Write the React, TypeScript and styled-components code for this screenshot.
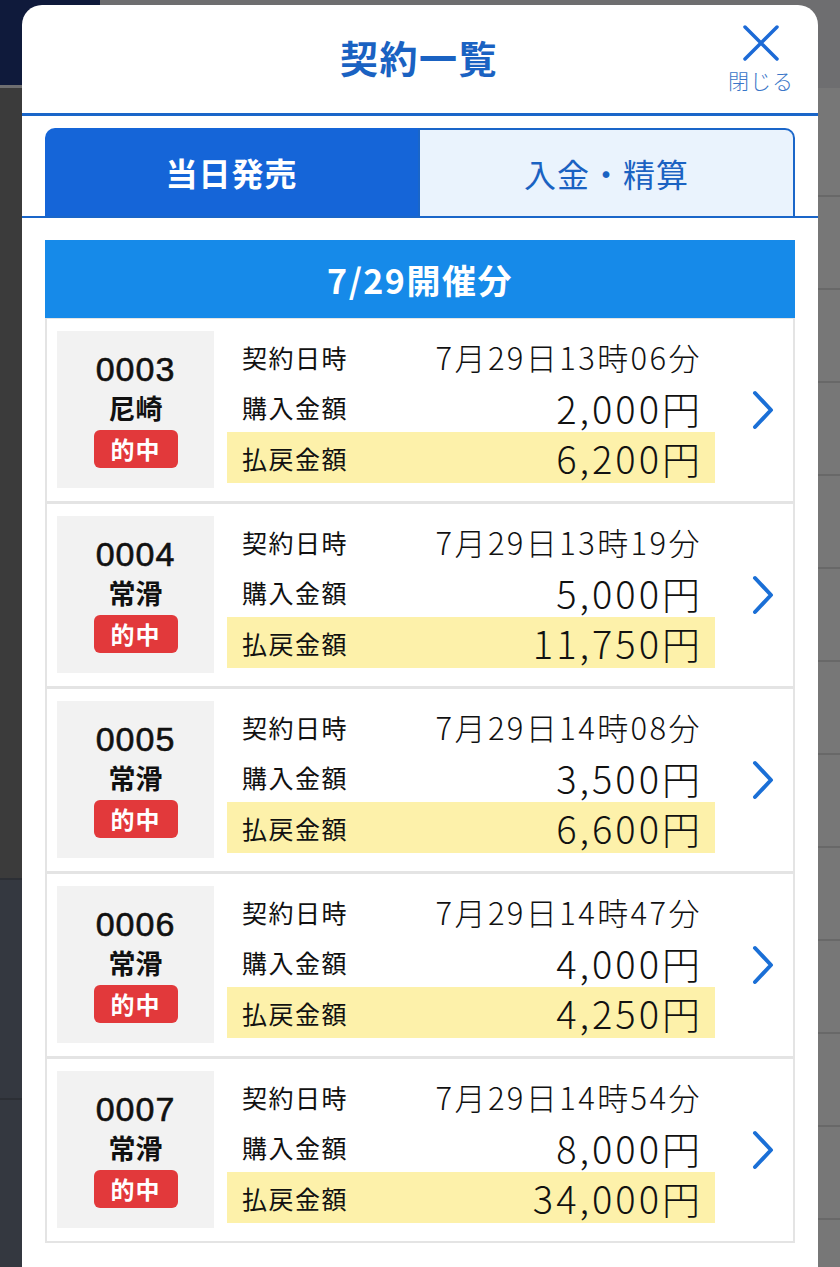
import styled, { createGlobalStyle } from "styled-components";

const GlobalStyle = createGlobalStyle`
  html, body {
    margin: 0;
    padding: 0;
    background: #3a3a3a;
  }
  * {
    box-sizing: border-box;
  }
`;

const FONT = `"Noto Sans CJK JP", "Noto Sans", "Liberation Sans", sans-serif`;

// dimmed page behind the sheet
const Page = styled.div`
  position: relative;
  width: 840px;
  height: 1267px;
  overflow: hidden;
  font-family: ${FONT};
`;

const BackTop = styled.div`
  display: flex;
  height: 88px;
  background: #6e6e70;
`;

const BackLogo = styled.div`
  width: 100px;
  height: 85px;
  background: #0f1a3b;
`;

const BackBody = styled.div`
  display: grid;
  grid-template-columns: 420px 1fr;
  height: calc(100% - 88px);
`;

const BackLeft = styled.div`
  display: flex;
  flex-direction: column;
`;

const BackPanel = styled.div<{ $tone: string; $h?: number }>`
  background: ${(p) => p.$tone};
  height: ${(p) => (p.$h ? `${p.$h}px` : "auto")};
  flex: ${(p) => (p.$h ? "none" : "1")};
  border-bottom: 2px solid #2c2f35;
`;

const BackRight = styled.div`
  display: flex;
  flex-direction: column;
  padding-top: 16px;
  background: #777777;
`;

const BackRow = styled.div`
  height: 93px;
  flex: none;
  border-bottom: 2px solid #686868;
`;

const Sheet = styled.div`
  position: absolute;
  left: 22px;
  top: 5px;
  width: 796px;
  bottom: -20px;
  background: #ffffff;
  border-radius: 20px 20px 0 0;
  display: flex;
  flex-direction: column;
`;

const Header = styled.div`
  display: grid;
  grid-template-columns: 1fr auto 1fr;
  align-items: center;
  height: 111px;
  border-bottom: 3px solid #1a66c9;
  padding: 0 24px 6px 22px;
`;

const Title = styled.h1`
  grid-column: 2;
  margin: 0;
  font-size: 38px;
  font-weight: 700;
  color: #1a62c2;
  letter-spacing: 1.5px;
`;

const CloseButton = styled.button`
  justify-self: end;
  display: flex;
  flex-direction: column;
  align-items: center;
  gap: 4px;
  margin-top: 8px;
  border: none;
  background: none;
  padding: 0;
  font-family: ${FONT};
  font-size: 21px;
  font-weight: 300;
  letter-spacing: 1px;
  color: #3a76c8;
  cursor: pointer;
`;

const TabBar = styled.div`
  display: flex;
  padding: 12px 23px 0 23px;
  border-bottom: 2px solid #1a66c9;
`;

const Tab = styled.div<{ $active?: boolean }>`
  flex: 1;
  height: 88px;
  display: flex;
  align-items: center;
  justify-content: center;
  font-size: 32px;
  font-weight: ${(p) => (p.$active ? 700 : 400)};
  color: ${(p) => (p.$active ? "#ffffff" : "#1a62c2")};
  background: ${(p) => (p.$active ? "#1565d8" : "#eaf3fd")};
  border: ${(p) => (p.$active ? "none" : "2px solid #1a66c9")};
  border-bottom: none;
  border-radius: ${(p) => (p.$active ? "10px 0 0 0" : "0 10px 0 0")};
  letter-spacing: 1px;
`;

const Content = styled.div`
  padding: 22px 23px 0 23px;
`;

const DateBar = styled.div`
  height: 78px;
  display: flex;
  align-items: center;
  justify-content: center;
  background: #168ae9;
  color: #ffffff;
  font-size: 34px;
  font-weight: 700;
  letter-spacing: 1.5px;
`;

const Card = styled.div`
  display: flex;
  align-items: flex-start;
  gap: 13px;
  padding: 12px 0 13px 10px;
  border: 2px solid #e4e4e4;
  border-top-width: 1px;
  border-bottom-width: 2px;
`;

const Venue = styled.div`
  width: 157px;
  height: 157px;
  flex: none;
  background: #f2f2f2;
  display: flex;
  flex-direction: column;
  align-items: center;
  justify-content: center;
  gap: 2px;
  padding-bottom: 2px;
  color: #111111;
`;

const RaceNo = styled.div`
  font-family: "Liberation Sans", ${FONT};
  font-size: 34px;
  line-height: 38px;
  letter-spacing: 1px;
  -webkit-text-stroke: 0.6px #111111;
`;

const Place = styled.div`
  font-size: 27px;
  line-height: 36px;
  font-weight: 700;
`;

const Badge = styled.div`
  margin-top: 2px;
  width: 84px;
  height: 38px;
  border-radius: 6px;
  background: #e2393b;
  color: #ffffff;
  font-size: 24px;
  font-weight: 700;
  display: flex;
  align-items: center;
  justify-content: center;
  letter-spacing: 1px;
`;

const Info = styled.div`
  width: 488px;
  flex: none;
  display: grid;
  grid-template-rows: 51px 50px 51px;
`;

const InfoRow = styled.div<{ $highlight?: boolean }>`
  display: flex;
  align-items: center;
  justify-content: space-between;
  padding: 0 15px;
  background: ${(p) => (p.$highlight ? "#fdf1aa" : "transparent")};
  color: #111111;
`;

const Label = styled.span`
  font-size: 25px;
  letter-spacing: 1.5px;
`;

const Value = styled.span<{ $big?: boolean }>`
  font-size: ${(p) => (p.$big ? "38px" : "31px")};
  font-weight: 300;
  letter-spacing: ${(p) => (p.$big ? "3px" : "2.4px")};
  margin-right: ${(p) => (p.$big ? "-3px" : "-2px")};
`;

const Chevron = styled.div`
  flex: 1;
  align-self: center;
  display: flex;
  justify-content: center;
  padding-left: 4px;
`;

type Contract = {
  no: string;
  place: string;
  time: string;
  bought: string;
  payout: string;
};

const contracts: Contract[] = [
  { no: "0003", place: "尼崎", time: "7月29日13時06分", bought: "2,000円", payout: "6,200円" },
  { no: "0004", place: "常滑", time: "7月29日13時19分", bought: "5,000円", payout: "11,750円" },
  { no: "0005", place: "常滑", time: "7月29日14時08分", bought: "3,500円", payout: "6,600円" },
  { no: "0006", place: "常滑", time: "7月29日14時47分", bought: "4,000円", payout: "4,250円" },
  { no: "0007", place: "常滑", time: "7月29日14時54分", bought: "8,000円", payout: "34,000円" },
];

const App = () => {
  return (
    <Page>
      <GlobalStyle />
      <BackTop>
        <BackLogo />
      </BackTop>
      <BackBody>
        <BackLeft>
          <BackPanel $tone="#3b3b3b" $h={792} />
          <BackPanel $tone="#343840" $h={220} />
          <BackPanel $tone="#343840" />
        </BackLeft>
        <BackRight>
          {Array.from({ length: 13 }).map((_, i) => (
            <BackRow key={i} />
          ))}
        </BackRight>
      </BackBody>

      <Sheet>
        <Header>
          <Title>契約一覧</Title>
          <CloseButton>
            <svg width="36" height="36" viewBox="0 0 36 36">
              <path d="M2 2 L34 34 M34 2 L2 34" stroke="#1c6ad6" strokeWidth="3.5" strokeLinecap="round" />
            </svg>
            閉じる
          </CloseButton>
        </Header>

        <TabBar>
          <Tab $active>当日発売</Tab>
          <Tab>入金・精算</Tab>
        </TabBar>

        <Content>
          <DateBar>7/29開催分</DateBar>
          {contracts.map((c) => (
            <Card key={c.no}>
              <Venue>
                <RaceNo>{c.no}</RaceNo>
                <Place>{c.place}</Place>
                <Badge>的中</Badge>
              </Venue>
              <Info>
                <InfoRow>
                  <Label>契約日時</Label>
                  <Value>{c.time}</Value>
                </InfoRow>
                <InfoRow>
                  <Label>購入金額</Label>
                  <Value $big>{c.bought}</Value>
                </InfoRow>
                <InfoRow $highlight>
                  <Label>払戻金額</Label>
                  <Value $big>{c.payout}</Value>
                </InfoRow>
              </Info>
              <Chevron>
                <svg width="24" height="40" viewBox="0 0 24 40">
                  <path d="M4 3 L20 20 L4 37" fill="none" stroke="#1a6fd6" strokeWidth="4" strokeLinecap="round" strokeLinejoin="round" />
                </svg>
              </Chevron>
            </Card>
          ))}
        </Content>
      </Sheet>
    </Page>
  );
};

export default App;
